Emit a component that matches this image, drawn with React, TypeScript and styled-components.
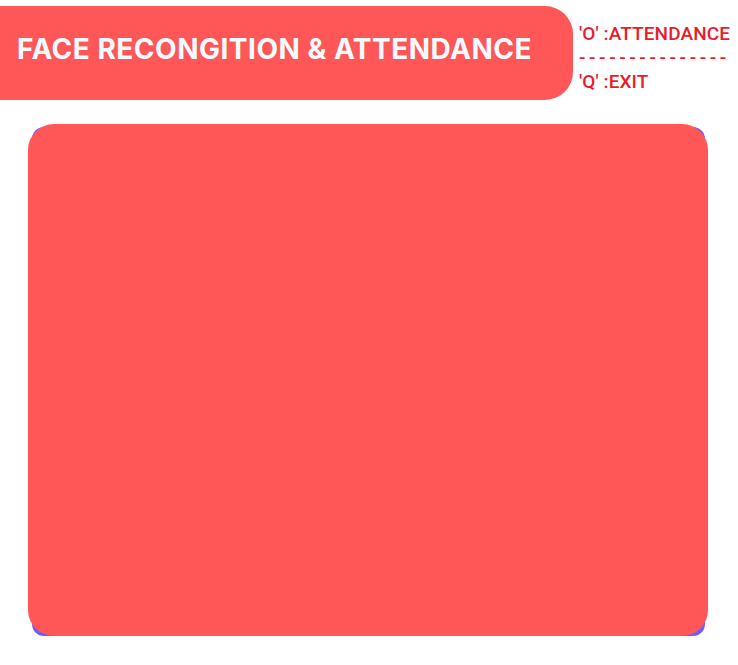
import styled, { createGlobalStyle } from 'styled-components';

const GlobalStyle = createGlobalStyle`
	html, body {
		margin: 0;
		padding: 0;
		background: #ffffff;
	}
`;

const Page = styled.div`
	width: 738px;
	height: 665px;
	padding-top: 6px;
	box-sizing: border-box;
	display: flex;
	flex-direction: column;
`;

const Header = styled.div`
	display: flex;
	align-items: flex-start;
	gap: 6px;
`;

const Banner = styled.div`
	width: 573px;
	height: 94px;
	box-sizing: border-box;
	padding: 0 0 8px 17px;
	display: flex;
	align-items: center;
	background: #ff5757;
	border-radius: 0 28px 28px 0;
`;

const Title = styled.h1`
	margin: 0;
	font-family: Inter, 'Liberation Sans', sans-serif;
	font-weight: 700;
	font-size: 28px;
	letter-spacing: 0.5px;
	color: #f4fbff;
	white-space: nowrap;
`;

const Keys = styled.div`
	display: flex;
	flex-direction: column;
	padding-top: 16px;
	font-family: Roboto, 'Liberation Sans', sans-serif;
	font-weight: 500;
	font-size: 19px;
	line-height: 24px;
	letter-spacing: 0.1px;
	color: #ea1c2c;
	white-space: nowrap;
`;

const KeyLine = styled.div<{ $dashed?: boolean }>`
	letter-spacing: ${(p) => (p.$dashed ? '3.6px' : 'inherit')};
`;

const Frame = styled.div`
	margin: 27px 0 0 32px;
	width: 673px;
	height: 509px;
	background: #6b5cff;
	border-radius: 12px;
	display: flex;
`;

const Screen = styled.div`
	margin: -3px 0 0 -4px;
	width: 680px;
	height: 512px;
	flex-shrink: 0;
	background: #ff5757;
	border-radius: 26px;
`;

export default function App() {
	return (
		<Page>
			<GlobalStyle />
			<Header>
				<Banner>
					<Title>FACE RECONGITION &amp; ATTENDANCE</Title>
				</Banner>
				<Keys>
					<KeyLine>'O' :ATTENDANCE</KeyLine>
					<KeyLine $dashed>---------------</KeyLine>
					<KeyLine>'Q' :EXIT</KeyLine>
				</Keys>
			</Header>
			<Frame>
				<Screen />
			</Frame>
		</Page>
	);
}
